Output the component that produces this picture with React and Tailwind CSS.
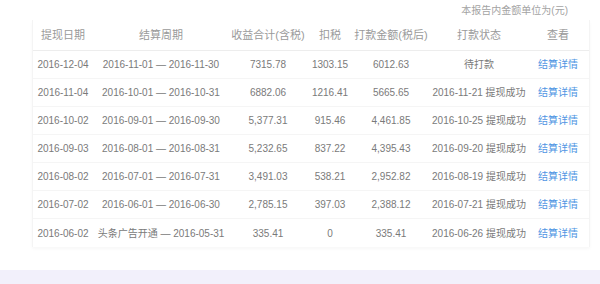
import React from "react";

const rows = [
  ["2016-12-04", "2016-11-01 — 2016-11-30", "7315.78", "1303.15", "6012.63", "待打款"],
  ["2016-11-04", "2016-10-01 — 2016-10-31", "6882.06", "1216.41", "5665.65", "2016-11-21 提现成功"],
  ["2016-10-02", "2016-09-01 — 2016-09-30", "5,377.31", "915.46", "4,461.85", "2016-10-25 提现成功"],
  ["2016-09-03", "2016-08-01 — 2016-08-31", "5,232.65", "837.22", "4,395.43", "2016-09-20 提现成功"],
  ["2016-08-02", "2016-07-01 — 2016-07-31", "3,491.03", "538.21", "2,952.82", "2016-08-19 提现成功"],
  ["2016-07-02", "2016-06-01 — 2016-06-30", "2,785.15", "397.03", "2,388.12", "2016-07-21 提现成功"],
  ["2016-06-02", "头条广告开通 — 2016-05-31", "335.41", "0", "335.41", "2016-06-26 提现成功"],
];

const headers = ["提现日期", "结算周期", "收益合计(含税)", "扣税", "打款金额(税后)", "打款状态", "查看"];

const cols = "grid grid-cols-[60px_136px_78px_46px_76px_100px_58px]";

const App = () => {
  return (
    <div
      className="w-[600px] h-[284px] bg-white flex flex-col overflow-hidden"
      style={{ fontFamily: '"Liberation Sans", "Noto Sans CJK SC", sans-serif' }}
    >
      <div className="h-[20px] flex items-center justify-end pr-[32px] text-[10px] text-[#a3a3a3]">
        本报告内金额单位为(元)
      </div>

      <div className="ml-[32px] w-[558px] border-l border-r border-[#f4f4f4] shadow-[0_2px_3px_rgba(0,0,0,0.03)]">
        <div className={`${cols} h-[31px] items-center text-[11px] text-[#9a9a9a] border-b border-[#ededed] text-center`}>
          {headers.map((h) => (
            <div key={h}>{h}</div>
          ))}
        </div>

        {rows.map((r, i) => (
          <div
            key={i}
            className={`${cols} h-[28px] items-center text-[10px] text-[#7a7a7a] text-center whitespace-nowrap ${
              i < rows.length - 1 ? "border-b border-[#f5f5f5]" : ""
            }`}
          >
            <div>{r[0]}</div>
            <div>{r[1]}</div>
            <div>{r[2]}</div>
            <div>{r[3]}</div>
            <div>{r[4]}</div>
            <div>{r[5]}</div>
            <div className="text-[#4f95e3]">结算详情</div>
          </div>
        ))}
      </div>

      <div className="flex-1" />
      <div className="h-[14px] bg-[#f2f0fb]" />
    </div>
  );
};

export default App;
